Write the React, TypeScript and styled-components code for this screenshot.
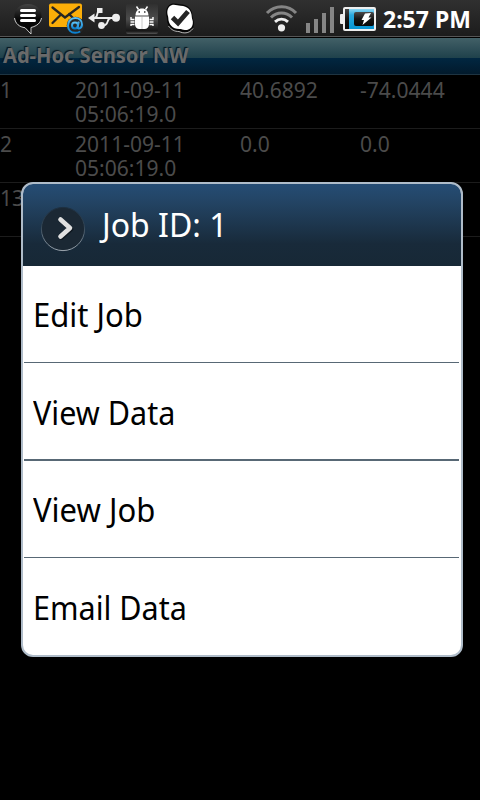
import React from "react";
import styled, { createGlobalStyle } from "styled-components";

const GlobalStyle = createGlobalStyle`
  * { box-sizing: border-box; }
  body { margin: 0; background: #000; font-family: "Noto Sans", sans-serif; }
`;

const Screen = styled.main`
  position: relative;
  width: 480px;
  height: 800px;
  overflow: hidden;
  background: #000;
`;

const StatusBar = styled.header`
  height: 38px;
  display: flex;
  justify-content: space-between;
  background: linear-gradient(#303030, #1c1c1c 36px, #555 36px, #555 37px, #000 37px);
`;

const Icons = styled.svg`
  display: block;
  height: 38px;
`;

const StatusRight = styled.div`
  display: flex;
`;

const Fit = styled.span<{ $x?: number }>`
  display: inline-block;
  white-space: nowrap;
  transform-origin: 0 50%;
  transform: scaleX(${(p) => p.$x ?? 1});
`;

const Clock = styled.div`
  width: 97px;
  height: 36px;
  font-size: 23px;
  font-weight: 700;
  line-height: 39px;
  color: #fff;
`;

const TitleBar = styled.h1`
  margin: 0;
  height: 37px;
  padding-left: 3px;
  font-size: 22px;
  font-weight: 700;
  line-height: 33px;
  color: #6a6a6a;
  text-shadow: -1px -1px 1px #06151c;
  border-bottom: 1px solid #1e3442;
  background: linear-gradient(#426067, #1f414b 20px, #012741 20px, #021a2c);
`;

const Row = styled.div`
  display: grid;
  grid-template-columns: 75px 165px 120px 120px;
  height: 54px;
  border-bottom: 1px solid #1c1c1c;
  font-size: 22px;
  line-height: 24px;
  padding-top: 2px;
  color: #4b4b4b;
`;

const Cell = styled.div`
  white-space: pre;
  transform-origin: 0 50%;
  transform: scaleX(0.957);
`;

const Dialog = styled.section`
  position: absolute;
  left: 21px;
  top: 182px;
  width: 442px;
  height: 475px;
  border: 2px solid #afbcc9;
  border-radius: 12px;
  overflow: hidden;
  background: #fff;
`;

const DialogHeader = styled.div`
  height: 82px;
  display: flex;
  padding-left: 17px;
  background: linear-gradient(#254c74, #234464 18px, #182a3a 60px, #172836);
`;

const DialogTitle = styled.h2`
  margin: 0 0 0 16px;
  font-size: 33px;
  font-weight: 400;
  line-height: 81px;
  color: #fff;
`;

const Option = styled.div<{ $h: number; $line: number; $lead: number }>`
  height: ${(p) => p.$h}px;
  margin: 0 2px 0 1px;
  padding-left: 9px;
  font-size: 33px;
  line-height: ${(p) => p.$lead}px;
  color: #000;
  border-bottom: ${(p) => p.$line}px solid #586875;
`;

const jobs = [
  ["1", "2011-09-11\n05:06:19.0", "40.6892", "-74.0444"],
  ["2", "2011-09-11\n05:06:19.0", "0.0", "0.0"],
  ["13", "", "", ""],
];

const options = [
  { label: "Edit Job", h: 97, line: 1, x: 0.94, lead: 98 },
  { label: "View Data", h: 98, line: 2, x: 0.925, lead: 100 },
  { label: "View Job", h: 97, line: 1, x: 0.94, lead: 98 },
  { label: "Email Data", h: 97, line: 0, x: 0.925, lead: 100 },
];

function Notifications() {
  return (
    <Icons width="200" viewBox="0 0 200 38">
      <defs>
        <linearGradient id="bubble" x2="0" y2="1">
          <stop stopColor="#444" /><stop offset=".5" stopColor="#080808" /><stop offset="1" stopColor="#000" />
        </linearGradient>
        <linearGradient id="at" x2="0" y2="1">
          <stop stopColor="#5cc0f5" /><stop offset="1" stopColor="#087fd0" />
        </linearGradient>
        <linearGradient id="tile" x2="0" y2="1">
          <stop stopColor="#303030" /><stop offset=".5" stopColor="#4c4c4c" /><stop offset=".9" stopColor="#161616" /><stop offset="1" stopColor="#555" />
        </linearGradient>
      </defs>
      <path d="M28 4c8 0 13.500 5 13.500 12 0 6-4 10-10 11.500L31 34l-6-6.500C18.500 26.500 14.500 22 14.500 16 14.500 9 20 4 28 4Z" fill="url(#bubble)" />
      <path d="M14.500 18c1 6 5 9 10.500 9.700l6 6.300v-6.500c6-1.500 9.500-4.500 10.500-9.500" fill="none" stroke="#ddd" strokeWidth=".9" />
      <path d="M21.500 10.500h13M21.500 15.500h13M21.500 20.500h13" stroke="#fff" strokeWidth="3" strokeLinecap="round" />
      <rect x="49" y="3.500" width="33" height="23.500" rx="2" fill="#fbae08" />
      <path d="M52.500 7.500 65 17.500 79 7M52.500 23l8-8M69 14l9 9" fill="none" stroke="#282622" strokeWidth="2.300" strokeLinecap="round" />
      <circle cx="75.500" cy="25.500" r="8.800" fill="#262626" />
      <circle cx="75" cy="25.500" r="3" fill="none" stroke="url(#at)" strokeWidth="2" />
      <path d="M78.800 21.500 77.600 27c-.4 3 4.400 1.500 4.400-2.500 0-4-3-6.500-6.800-6.500-4.400 0-7.200 3.500-7.200 7.800 0 4.200 3 7 7.200 7 2 0 3.600-.5 5-1.300" fill="none" stroke="url(#at)" strokeWidth="2" />
      <g fill="none" stroke="#eee" strokeWidth="1.800">
        <path d="M92 18h25M94.500 18c4 0 1.500-7.500 5.500-7.500M101 25.500h2c6.500 0 3-7.500 8-7.500" />
      </g>
      <path d="m88 18 6.500-4.500v9Z" fill="#eee" />
      <rect x="97" y="8" width="5.500" height="5" fill="#eee" />
      <circle cx="101.500" cy="25.500" r="3.400" fill="#eee" /><circle cx="116" cy="17.800" r="4" fill="#eee" />
      <rect x="126" y="4" width="32" height="30" rx="2" fill="url(#tile)" />
      <path d="M135.500 15.500c0-4.500 3-7 6.500-7s6.500 2.500 6.500 7ZM135 16.500h14v8c0 2.500-2 4.500-4.500 4.500h-5c-2.500 0-4.500-2-4.500-4.500Z" fill="#fff" />
      <path d="m136.500 6.500 2 3M147.500 6.500l-2 3M134.500 19.500H131v-2.500M134.500 22h-4M134.500 24.500H131v1.500M149.500 19.500h3.500v-2.500M149.500 22h4M149.500 24.500h3.500v1.500" fill="none" stroke="#fff" strokeWidth="1.400" />
      <path d="M142 17v12" stroke="#bbb" strokeWidth=".8" />
      <path d="M138.500 12h1.500M144 12h1.500" stroke="#333" strokeWidth="1.300" />
      <path d="M171 4c3-1 6 .2 9 .2 8 0 12.500 5 12.500 12 0 2.500 1.500 4 1.500 7 0 5.500-4 9.800-9.500 9.300-2-.3-3-1.500-6-1.500-7 0-11.500-5-11.500-12 0-2-1-3-1-6.500 0-3.500 2-7.500 5-8.500Z" fill="#050505" />
      <path d="M172 5c3-.7 6 .7 8.500.7 7.500 0 11.300 5 11.300 11.300 0 2 1.500 3.500 1 6.500-.5 4.500-4 7-8 6.500-2-.3-3-1-5.500-1-6.800 0-11-4.800-11-11 0-2-1-3-1-5.500 0-3.500 1.700-6.800 4.700-7.500Z" fill="#fff" />
      <path d="m172.500 17.500 5.500 5.500 10-11.500" fill="none" stroke="#252525" strokeWidth="4.900" />
      <path d="M168.500 26c3 4 6 5.500 10.500 5.500 4 2 10 2.500 14-3" fill="none" stroke="#ddd" strokeWidth=".8" />
    </Icons>
  );
}

function Signals() {
  return (
    <Icons width="123" viewBox="260 0 123 38">
      <defs>
        <linearGradient id="charge" x2="0" y2="1">
          <stop stopColor="#8cd7f4" /><stop offset=".3" stopColor="#29a9de" /><stop offset="1" stopColor="#0795d4" />
        </linearGradient>
        <linearGradient id="dark" x2="0" y2="1">
          <stop stopColor="#4a4a4a" /><stop offset=".5" stopColor="#151515" /><stop offset="1" stopColor="#080808" />
        </linearGradient>
      </defs>
      <g fill="none" strokeWidth="3">
        <path d="M267 13c8-8.500 21.500-8.500 29 0" stroke="#858585" />
        <path d="M271 17.500c6-6 15-6 21 0" stroke="#858585" />
        <path d="M275 21.800c4-3.500 9-3.500 13 0" stroke="#eee" />
      </g>
      <circle cx="281.500" cy="27.800" r="3.600" fill="#eee" />
      <path d="M306 23h4v10h-4zM314 19h4v14h-4zM322 13h4v20h-4zM330 7h4v26h-4z" fill="#858585" />
      <rect x="340" y="14" width="4" height="10" rx="1" fill="#eee" />
      <rect x="344" y="8" width="31" height="22" rx="1" fill="url(#dark)" stroke="#eee" strokeWidth="2" />
      <rect x="349" y="9" width="25" height="20" fill="url(#charge)" />
      <rect x="354" y="12" width="20" height="14" rx="2" fill="url(#dark)" />
      <path d="m365 13.500 6-.5-2.500 4.500h3L362.500 25l1.500-5h-2.500Z" fill="#fff" />
    </Icons>
  );
}

function ArrowBadge() {
  return (
    <svg width="46" height="82" viewBox="40 184 46 82">
      <defs>
        <linearGradient id="rim" x2="0" y2="1">
          <stop stopColor="#1d2f40" /><stop offset=".45" stopColor="#344757" /><stop offset="1" stopColor="#9aa4ad" />
        </linearGradient>
      </defs>
      <circle cx="63" cy="229" r="21.600" fill="#1b2834" stroke="url(#rim)" />
      <path d="m60.500 219.500 9.500 8.500-9.500 8.500" fill="none" stroke="#101820" strokeWidth="4.800" strokeLinecap="round" strokeLinejoin="round" transform="translate(1 1)" />
      <path d="m60.500 219.500 9.500 8.500-9.500 8.500" fill="none" stroke="#e0e0e0" strokeWidth="4.600" strokeLinecap="round" strokeLinejoin="round" />
    </svg>
  );
}

export default function App() {
  return (
    <Screen>
      <GlobalStyle />
      <StatusBar>
        <Notifications />
        <StatusRight>
          <Signals />
          <Clock><Fit>2:57 PM</Fit></Clock>
        </StatusRight>
      </StatusBar>
      <TitleBar><Fit $x={0.914}>Ad-Hoc Sensor NW</Fit></TitleBar>
      {jobs.map((job) => (
        <Row key={job[0]}>
          {job.map((value, i) => <Cell key={i}>{value}</Cell>)}
        </Row>
      ))}
      <Dialog>
        <DialogHeader>
          <ArrowBadge />
          <DialogTitle><Fit $x={0.97}>Job ID: 1</Fit></DialogTitle>
        </DialogHeader>
        {options.map((o) => (
          <Option key={o.label} $h={o.h} $line={o.line} $lead={o.lead}>
            <Fit $x={o.x}>{o.label}</Fit>
          </Option>
        ))}
      </Dialog>
    </Screen>
  );
}
